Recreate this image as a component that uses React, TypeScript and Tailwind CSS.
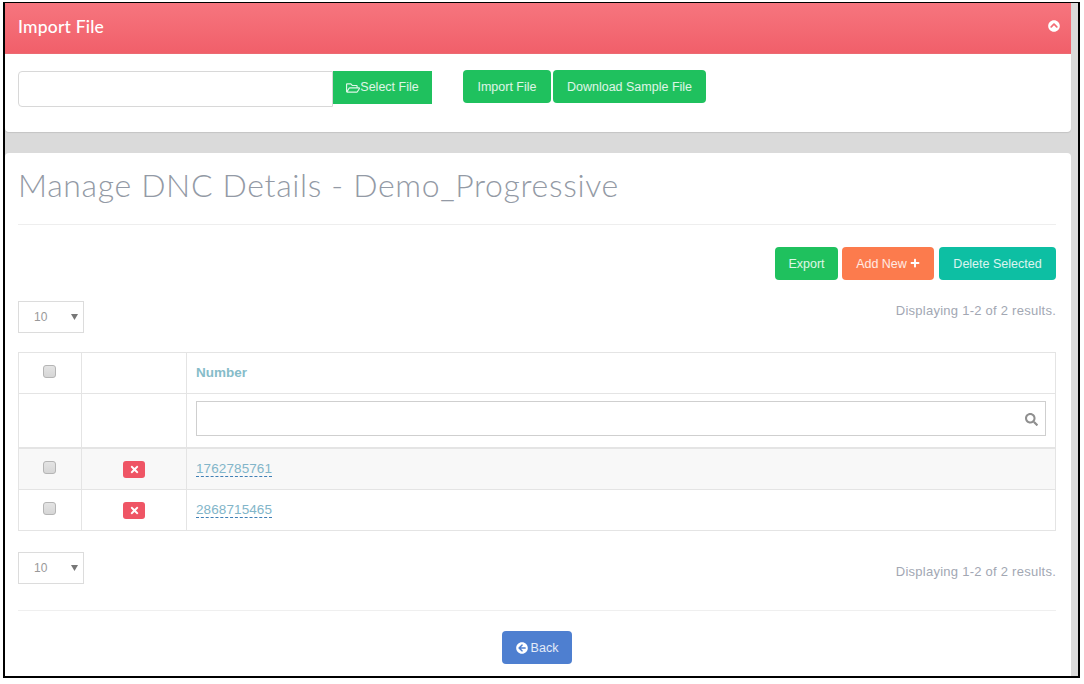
import { FaChevronCircleUp, FaRegFolderOpen, FaPlus, FaTimes, FaSearch, FaArrowCircleLeft } from 'react-icons/fa';

const rows = ['1762785761', '2868715465'];

const PageSize = () => (
  <div className="w-[66px] h-[32px] border border-[#dcdcdc] flex items-center justify-between pl-[15px] pr-[5px] text-[12px] text-[#999999]">
    <span>10</span>
    <svg viewBox="0 0 7 6" className="w-[7px] h-[6px] text-[#777]">
      <polygon points="0,0 7,0 3.5,6" fill="currentColor" />
    </svg>
  </div>
);

const Check = () => (
  <div className="pr-[2px]">
    <input
      type="checkbox"
      className="appearance-none block mx-auto w-[13px] h-[13px] rounded-[3px] border border-[#b5b5b5] bg-gradient-to-b from-[#e4e4e4] to-[#d6d6d6]"
    />
  </div>
);

const Btn = ({ children, color, width }: { children: React.ReactNode; color: string; width: string }) => (
  <button className={`${color} ${width} h-[33px] pt-[1px] rounded-[4px] text-white/85 text-[12.5px] flex items-center justify-center gap-[3px]`}>
    {children}
  </button>
);

export default function App() {
  return (
    <div className="w-[1084px] h-[684px] bg-white pl-[3px] pt-[2px] font-['Liberation_Sans',sans-serif] overflow-hidden">
      <div className="w-[1077px] h-[676px] border-t border-l-2 border-r-2 border-b-2 border-black bg-[#dadada] pr-[7px] flex flex-col gap-[21px] overflow-hidden">
        {/* Import panel */}
        <section className="bg-white rounded-b-[4px] h-[129px] shadow-[0_1px_1px_rgba(0,0,0,0.1)]">
          <div className="h-[51px] bg-gradient-to-b from-[#f6757e] to-[#f15f6a] flex items-center justify-between pl-[13px] pr-[11px] border-b border-[#ec6a72]">
            <h3 className="text-white text-[17.5px] font-['Lato',sans-serif] font-medium tracking-[0.2px] -mt-[2px]">Import File</h3>
            <FaChevronCircleUp className="w-[12px] h-[12px] text-white -mt-[4px]" />
          </div>
          <div className="flex items-start pl-[13px] pt-[16px]">
            <input className="w-[315px] h-[36px] mt-[1px] border border-[#d8d8d8] rounded-l-[4px] bg-white" />
            <button className="w-[99px] h-[33px] mt-[1px] bg-[#1fc15e] text-white/85 text-[12.5px] flex items-center justify-center">
              <FaRegFolderOpen className="w-[14px] h-[14px]" />
              Select File
            </button>
            <div className="flex gap-[2px] ml-[31px]">
              <Btn color="bg-[#1fc15e]" width="w-[88px]">Import File</Btn>
              <Btn color="bg-[#1fc15e]" width="w-[153px]">Download Sample File</Btn>
            </div>
          </div>
        </section>

        {/* DNC details panel */}
        <section className="flex-1 bg-white rounded-t-[4px] pl-[13px] pr-[15px]">
          <h1 className="h-[72px] pt-[11px] text-[32px] leading-[42px] font-['Lato',sans-serif] font-light text-[#939aa5] tracking-[0.65px] border-b border-[#eeeeee]">
            Manage DNC Details - Demo_Progressive
          </h1>

          <div className="flex justify-end gap-[4px] mt-[22px]">
            <Btn color="bg-[#1fc15e]" width="w-[63px]">Export</Btn>
            <Btn color="bg-[#fc7b4d]" width="w-[92px] mr-[1px]">
              Add New <FaPlus className="w-[10px] h-[10px] text-white -mt-[2px]" />
            </Btn>
            <Btn color="bg-[#0dbfa3]" width="w-[117px]">Delete Selected</Btn>
          </div>

          <div className="flex justify-between items-start mt-[21px]">
            <PageSize />
            <span className="text-[13px] text-[#a2a7b3] tracking-[0.25px]">Displaying 1-2 of 2 results.</span>
          </div>

          <table className="w-[1038px] mt-[19px] table-fixed border-collapse border border-[#e4e4e4] text-[13.5px]">
            <colgroup>
              <col className="w-[63px]" />
              <col className="w-[105px]" />
              <col />
            </colgroup>
            <thead>
              <tr className="h-[41px]">
                <th className="border border-[#e4e4e4]"><div className="-mt-[3px]"><Check /></div></th>
                <th className="border border-[#e4e4e4]"></th>
                <th className="border border-[#e4e4e4] text-left pl-[9px] text-[#86bcc9] font-bold text-[13.5px]">Number</th>
              </tr>
              <tr className="h-[54px]">
                <td className="border border-[#e4e4e4] border-b-2"></td>
                <td className="border border-[#e4e4e4] border-b-2"></td>
                <td className="border border-[#e4e4e4] border-b-2 px-[9px]">
                  <div className="relative -mt-[3px]">
                    <input className="block w-full h-[35px] border border-[#cfcfcf] bg-white" />
                    <FaSearch className="absolute right-[8px] top-[12px] w-[13px] h-[13px] text-[#8f8f8f]" />
                  </div>
                </td>
              </tr>
            </thead>
            <tbody>
              {rows.map((num, i) => (
                <tr key={num} className={i === 0 ? 'h-[42px] bg-[#f8f8f8]' : 'h-[41px] bg-white'}>
                  <td className="border border-[#e4e4e4]"><div className={i === 0 ? '-mt-[2px]' : '-mt-[4px]'}><Check /></div></td>
                  <td className="border border-[#e4e4e4]">
                    <button className={`mx-auto w-[22px] h-[17px] rounded-[3px] bg-[#ef5565] flex items-center justify-center ${i === 0 ? 'mt-[2px]' : 'mt-0'}`}>
                      <FaTimes className="w-[11px] h-[11px] text-white" />
                    </button>
                  </td>
                  <td className="border border-[#e4e4e4] pl-[9px]">
                    <a className="text-[#82b5c9] border-b border-dashed border-[#3f7fb5] tracking-[0.1px]">{num}</a>
                  </td>
                </tr>
              ))}
            </tbody>
          </table>

          <div className="flex justify-between items-center mt-[21px] pb-[26px] border-b border-[#efefef]">
            <PageSize />
            <span className="text-[13px] text-[#a2a7b3] tracking-[0.25px] mt-[7px]">Displaying 1-2 of 2 results.</span>
          </div>

          <div className="flex justify-center mt-[20px]">
            <button className="w-[70px] h-[33px] pt-[1px] rounded-[4px] bg-[#4e7fd0] text-white/85 text-[12.5px] flex items-center justify-center gap-[3px]">
              <FaArrowCircleLeft className="w-[12px] h-[12px] text-white" />
              Back
            </button>
          </div>
        </section>
      </div>
    </div>
  );
}
